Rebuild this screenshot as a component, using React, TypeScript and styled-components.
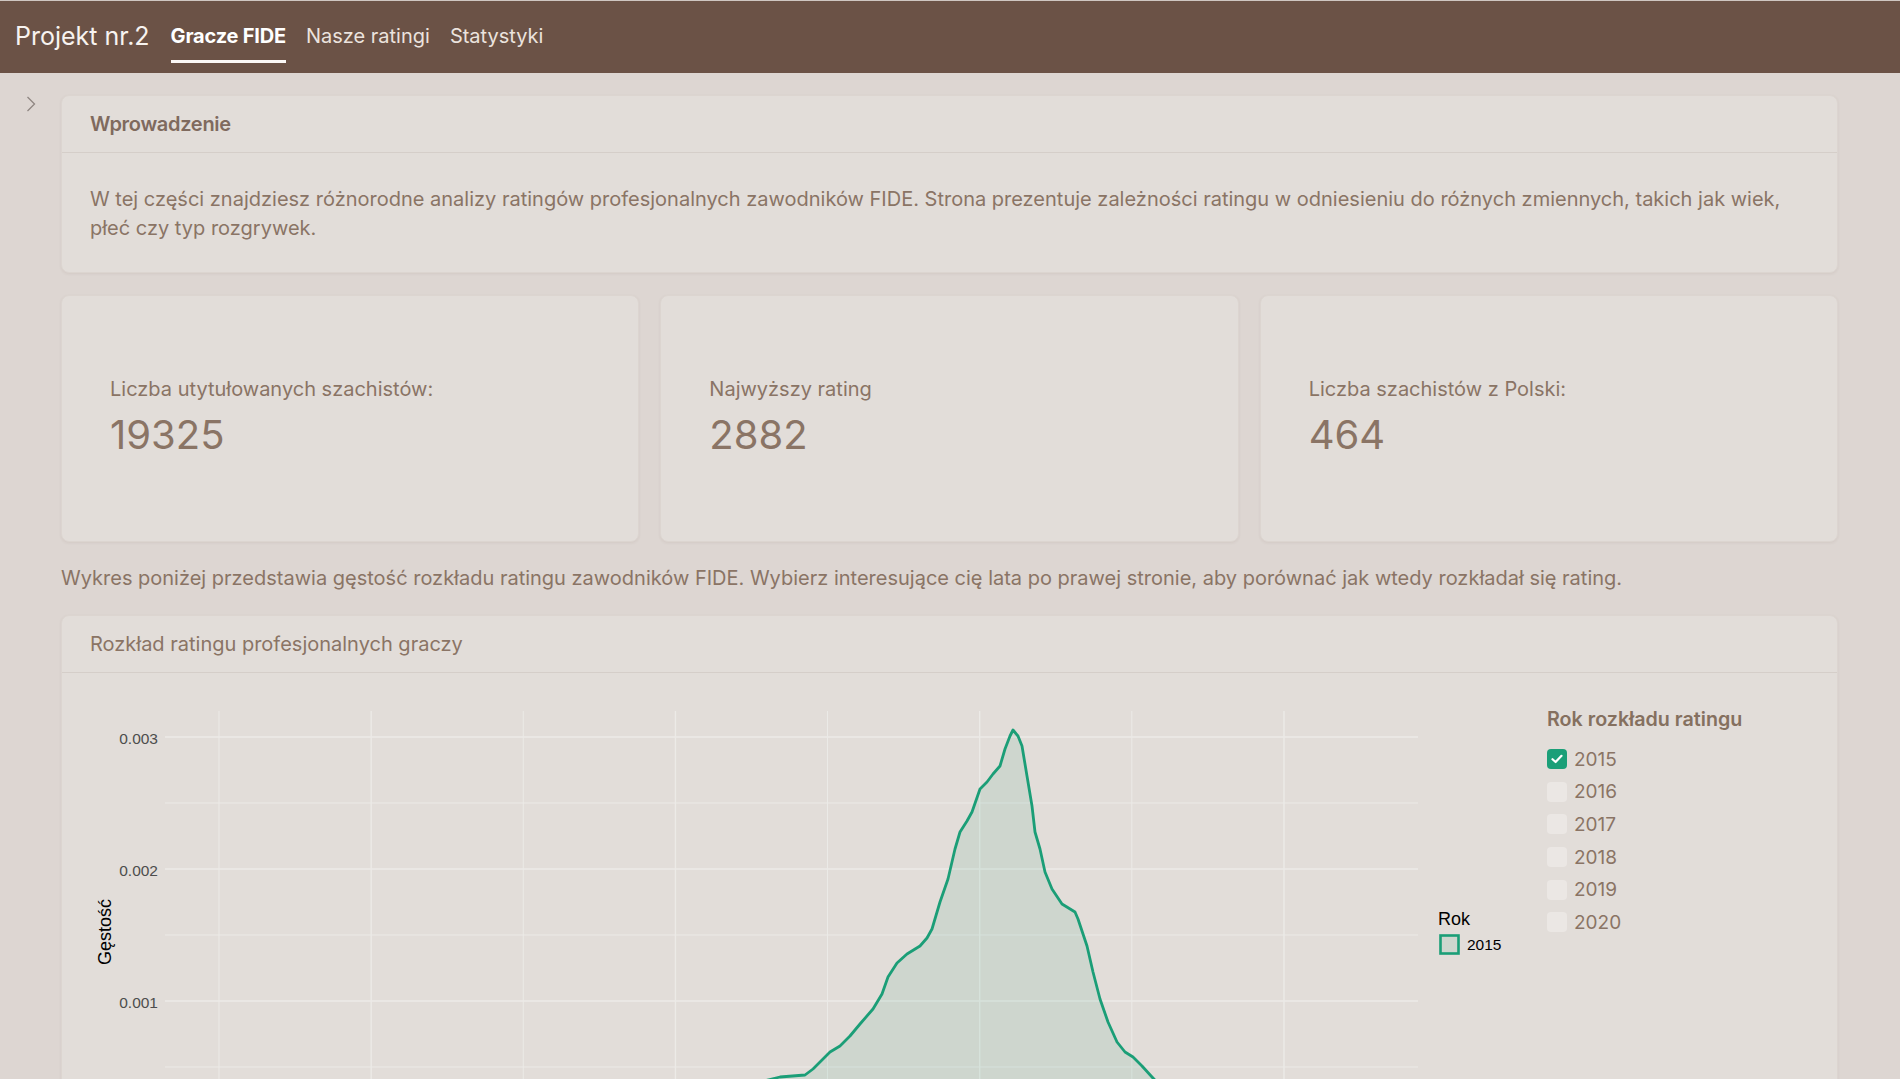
import React from "react";
import styled, { createGlobalStyle } from "styled-components";

const GlobalStyle = createGlobalStyle`
  html { scrollbar-width: none; }
  html::-webkit-scrollbar, body::-webkit-scrollbar { display: none; }
  body {
    margin: 0;
    background: #ddd6d2;
    font-family: Inter, "Noto Sans", "Liberation Sans", sans-serif;
    color: #8a7465;
  }
  * { box-sizing: border-box; }
`;

const Navbar = styled.header`
  height: 73px;
  background: #6b5246;
  border-top: 1px solid #cfc6c1;
  display: flex;
  align-items: flex-start;
  padding-left: 15px;
`;

const Brand = styled.div`
  font-size: 25px;
  line-height: 26px;
  padding-top: 22px;
  color: #f7f3f0;
  margin-right: 21px;
`;

const NavList = styled.nav`
  display: flex;
  gap: 20px;
`;

const NavLink = styled.a<{ $active?: boolean }>`
  font-size: 20px;
  line-height: 26px;
  padding: 22px 0 11px;
  border-bottom: 3px solid ${(p) => (p.$active ? "#fbf8f6" : "transparent")};
  color: ${(p) => (p.$active ? "#ffffff" : "#ebe3de")};
  font-weight: ${(p) => (p.$active ? 700 : 400)};
  letter-spacing: ${(p) => (p.$active ? "-0.2px" : "0")};
  text-decoration: none;
  cursor: pointer;
`;

const Layout = styled.div`
  display: flex;
  align-items: flex-start;
`;

const Rail = styled.aside`
  width: 61px;
  flex: 0 0 61px;
  padding: 23px 0 0 25px;
`;

const ToggleButton = styled.button`
  border: 0;
  background: transparent;
  padding: 0;
  width: 12px;
  height: 16px;
  display: flex;
  align-items: center;
  justify-content: center;
  cursor: pointer;
`;

const Main = styled.main`
  flex: 1;
  min-width: 0;
  padding: 22px 62px 40px 0;
  display: flex;
  flex-direction: column;
  gap: 22px;
`;

const Card = styled.section`
  background: #e2ddd9;
  border: 1px solid #dcd5d0;
  border-radius: 8px;
  box-shadow: 0 1px 3px rgba(90, 60, 45, 0.07);
`;

const CardHeader = styled.div<{ $bold?: boolean }>`
  padding: 15px 28px;
  font-size: 20px;
  line-height: 26px;
  font-weight: ${(p) => (p.$bold ? 600 : 400)};
  letter-spacing: ${(p) => (p.$bold ? "-0.3px" : "0")};
  color: ${(p) => (p.$bold ? "#7f6a5e" : "#8a7465")};
  border-bottom: 1px solid #d5cec9;
`;

const IntroBody = styled.div`
  padding: 32px 28px 29px;
`;

const Paragraph = styled.p`
  margin: 0;
  font-size: 20px;
  line-height: 29px;
`;

const StatsRow = styled.div`
  display: grid;
  grid-template-columns: repeat(3, 1fr);
  gap: 21px;
`;

const StatBox = styled(Card)`
  height: 247px;
  display: flex;
  flex-direction: column;
  justify-content: center;
  padding-left: 48px;
`;

const StatLabel = styled.div`
  font-size: 20px;
  line-height: 28px;
`;

const StatValue = styled.div`
  font-size: 40px;
  line-height: 56px;
  margin-top: 4px;
  font-weight: 400;
`;

const ChartBody = styled.div`
  padding: 16px 28px 24px;
  display: flex;
  gap: 27px;
`;

const PlotSvg = styled.svg`
  flex: 0 0 1430px;
  display: block;
`;

const Controls = styled.div`
  flex: 1;
  padding-top: 17px;
`;

const ControlsTitle = styled.div`
  font-size: 19.7px;
  line-height: 26px;
  font-weight: 600;
  color: #85705f;
  margin-bottom: 11px;
`;

const CheckRow = styled.label`
  display: flex;
  align-items: center;
  gap: 7px;
  height: 32.6px;
  font-size: 19px;
  color: #8a7465;
  cursor: pointer;
`;

const CheckBox = styled.span<{ $checked?: boolean }>`
  width: 20px;
  height: 20px;
  border-radius: 4px;
  background: ${(p) => (p.$checked ? "#1b9f78" : "#ebe7e4")};
  display: flex;
  align-items: center;
  justify-content: center;
  flex: 0 0 20px;
`;

const stats = [
  { label: "Liczba utytułowanych szachistów:", value: "19325" },
  { label: "Najwyższy rating", value: "2882" },
  { label: "Liczba szachistów z Polski:", value: "464" },
];

const years = ["2015", "2016", "2017", "2018", "2019", "2020"];

const curve: [number, number][] = [
  [560, 1134], [620, 1128], [680, 1113], [730, 1095], [760, 1083], [780, 1078],
  [805, 1076], [813, 1070], [823, 1060], [830, 1053], [840, 1047], [850, 1037],
  [860, 1025], [873, 1010], [882, 995], [888, 978], [897, 964], [907, 955],
  [920, 947], [927, 939], [932, 930], [940, 903], [948, 880], [955, 850],
  [960, 833], [967, 822], [972, 813], [980, 790], [987, 783], [993, 775],
  [1000, 767], [1005, 750], [1010, 737], [1013, 731], [1018, 737], [1022, 747],
  [1027, 777], [1032, 807], [1035, 833], [1040, 850], [1045, 873], [1052, 890],
  [1062, 905], [1075, 913], [1078, 920], [1087, 947], [1093, 973], [1100, 1000],
  [1108, 1023], [1117, 1043], [1125, 1053], [1133, 1058], [1142, 1067],
  [1152, 1078], [1170, 1097], [1200, 1117], [1240, 1129], [1290, 1134],
];

const hLines = [738, 804, 870, 936, 1002, 1068, 1134];
const vLines = Array.from({ length: 8 }, (_, i) => 219 + i * 152.14);
const yTicks = [
  { y: 738, t: "0.003" },
  { y: 870, t: "0.002" },
  { y: 1002, t: "0.001" },
  { y: 1134, t: "0.000" },
];

function DensityPlot() {
  const line = curve.map(([x, y], i) => `${i ? "L" : "M"}${x} ${y}`).join(" ");
  const area = `${line} L1290 1134 L560 1134 Z`;
  return (
    <PlotSvg width={1430} height={525} viewBox="90 690 1430 525">
      {hLines.map((y, i) => (
        <line key={`h${i}`} x1={165} x2={1418} y1={y} y2={y} stroke="#eceae7" strokeWidth={i % 2 === 0 ? 1.4 : 1} />
      ))}
      {vLines.map((x, i) => (
        <line key={`v${i}`} x1={x} x2={x} y1={712} y2={1154} stroke="#eceae7" strokeWidth={i % 2 === 0 ? 1 : 1.4} />
      ))}
      <path d={area} fill="#1b9e77" fillOpacity={0.1} />
      <path d={line} fill="none" stroke="#1b9e77" strokeWidth={2.8} strokeLinejoin="round" />
      {yTicks.map((t) => (
        <text key={t.t} x={158} y={t.y + 1} textAnchor="end" dominantBaseline="central" fontFamily="'Liberation Sans', Arial, sans-serif" fontSize={15.5} fill="#4d4d4d">
          {t.t}
        </text>
      ))}
      <text x={0} y={0} transform="translate(111 933) rotate(-90)" textAnchor="middle" fontFamily="'Liberation Sans', Arial, sans-serif" fontSize={18} fill="#000">
        Gęstość
      </text>
      <text x={1438} y={926} fontFamily="'Liberation Sans', Arial, sans-serif" fontSize={18} fill="#000">
        Rok
      </text>
      <rect x={1440.5} y={936.5} width={18} height={18} fill="#1b9e77" fillOpacity={0.1} stroke="#1b9e77" strokeWidth={2.6} />
      <text x={1467} y={951} fontFamily="'Liberation Sans', Arial, sans-serif" fontSize={15.5} fill="#000">
        2015
      </text>
    </PlotSvg>
  );
}

export default function App() {
  return (
    <>
      <GlobalStyle />
      <Navbar>
        <Brand>Projekt nr.2</Brand>
        <NavList>
          <NavLink $active>Gracze FIDE</NavLink>
          <NavLink>Nasze ratingi</NavLink>
          <NavLink>Statystyki</NavLink>
        </NavList>
      </Navbar>
      <Layout>
        <Rail>
          <ToggleButton aria-label="Pokaż panel boczny">
            <svg width="10" height="16" viewBox="0 0 10 16">
              <polyline points="1.5,1 8.5,8 1.5,15" fill="none" stroke="#8f8682" strokeWidth="1.3" />
            </svg>
          </ToggleButton>
        </Rail>
        <Main>
          <Card>
            <CardHeader $bold>Wprowadzenie</CardHeader>
            <IntroBody>
              <Paragraph>
                W tej części znajdziesz różnorodne analizy ratingów profesjonalnych zawodników FIDE. Strona prezentuje zależności ratingu w odniesieniu do różnych zmiennych, takich jak wiek, płeć czy typ rozgrywek.
              </Paragraph>
            </IntroBody>
          </Card>
          <StatsRow>
            {stats.map((s) => (
              <StatBox key={s.label}>
                <StatLabel>{s.label}</StatLabel>
                <StatValue>{s.value}</StatValue>
              </StatBox>
            ))}
          </StatsRow>
          <Paragraph>
            Wykres poniżej przedstawia gęstość rozkładu ratingu zawodników FIDE. Wybierz interesujące cię lata po prawej stronie, aby porównać jak wtedy rozkładał się rating.
          </Paragraph>
          <Card>
            <CardHeader>Rozkład ratingu profesjonalnych graczy</CardHeader>
            <ChartBody>
              <DensityPlot />
              <Controls>
                <ControlsTitle>Rok rozkładu ratingu</ControlsTitle>
                {years.map((y, i) => (
                  <CheckRow key={y}>
                    <CheckBox $checked={i === 0}>
                      {i === 0 && (
                        <svg width="12" height="10" viewBox="0 0 12 10">
                          <polyline points="1.5,5.2 4.6,8 10.5,1.8" fill="none" stroke="#fff" strokeWidth="2.2" strokeLinecap="round" strokeLinejoin="round" />
                        </svg>
                      )}
                    </CheckBox>
                    {y}
                  </CheckRow>
                ))}
              </Controls>
            </ChartBody>
          </Card>
        </Main>
      </Layout>
    </>
  );
}
